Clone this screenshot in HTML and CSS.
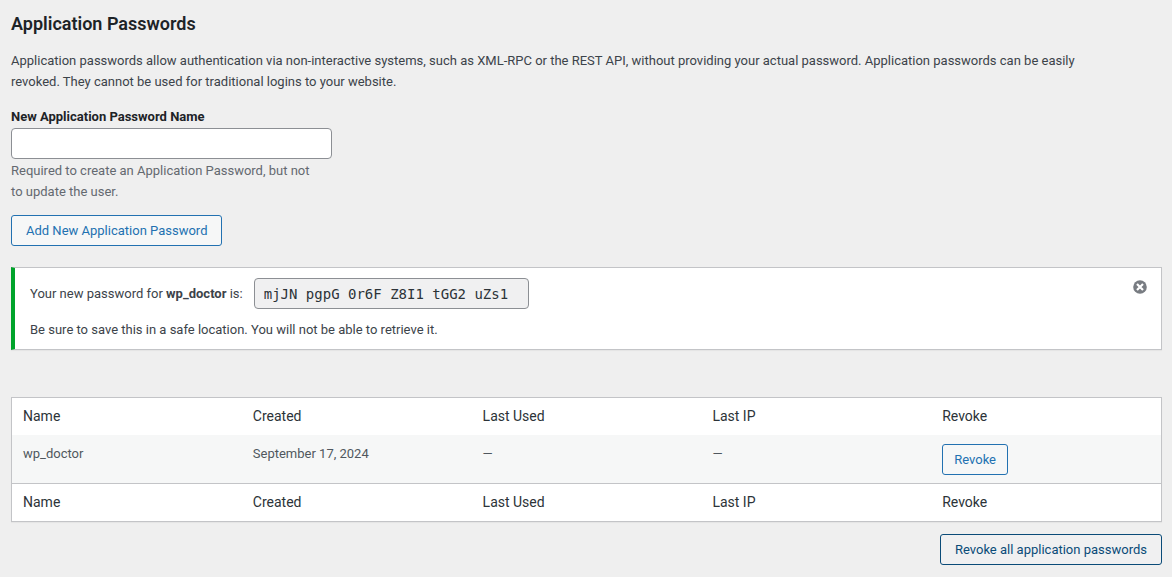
FILE: index.html
```html
<!DOCTYPE html>
<html lang="en">
<head>
<meta charset="utf-8">
<title>Application Passwords</title>
<link rel="stylesheet" href="styles.css">
</head>
<body>
<main class="application-passwords">
  <h2 class="title">Application Passwords</h2>
  <p class="intro">Application passwords allow authentication via non-interactive systems, such as XML-RPC or the REST API, without providing your actual password. Application passwords can be easily revoked. They cannot be used for traditional logins to your website.</p>

  <form class="create-form">
    <label class="field-label" for="app-name">New Application Password Name</label>
    <input class="text-input" type="text" id="app-name" aria-describedby="app-name-desc">
    <p class="description" id="app-name-desc">Required to create an Application Password, but not to update the user.</p>
    <button class="button button-wide" type="button">Add New Application Password</button>
  </form>

  <section class="notice">
    <div class="notice-body">
      <div class="password-row">
        <label for="new-password">Your new password for <strong>wp_doctor</strong> is:</label>
        <input class="code" id="new-password" type="text" readonly value="mjJN pgpG 0r6F Z8I1 tGG2 uZs1">
      </div>
      <p class="notice-text">Be sure to save this in a safe location. You will not be able to retrieve it.</p>
    </div>
    <button class="dismiss" type="button" aria-label="Dismiss this notice">
      <svg width="16" height="16" viewBox="0 0 16 16" aria-hidden="true"><circle cx="8" cy="8" r="6.8" fill="#787c82"/><path d="M5 5l6 6M11 5l-6 6" stroke="#fff" stroke-width="2.2"/></svg>
    </button>
  </section>

  <table class="list-table">
    <thead>
      <tr><th scope="col">Name</th><th scope="col">Created</th><th scope="col">Last Used</th><th scope="col">Last IP</th><th scope="col">Revoke</th></tr>
    </thead>
    <tbody>
      <tr><td>wp_doctor</td><td>September 17, 2024</td><td>—</td><td>—</td><td><button class="button" type="button">Revoke</button></td></tr>
    </tbody>
    <tfoot>
      <tr><th scope="col">Name</th><th scope="col">Created</th><th scope="col">Last Used</th><th scope="col">Last IP</th><th scope="col">Revoke</th></tr>
    </tfoot>
  </table>

  <div class="table-actions">
    <button class="button button-wide button-strong" type="button">Revoke all application passwords</button>
  </div>
</main>
</body>
</html>
```
FILE: styles.css
```css
* { box-sizing: border-box; }

body {
  margin: 0;
  background: #efefef;
  color: #3c434a;
  font: 13px/21px Roboto, sans-serif;
}

.application-passwords { padding: 12px 10px 12px 11px; }

.title {
  margin: 0;
  color: #1d2327;
  font-size: 18px;
  line-height: 24px;
  font-weight: 600;
}

.intro {
  max-width: 1110px;
  margin: 14px 0;
}

.create-form { max-width: 321px; }

.field-label {
  display: block;
  color: #1d2327;
  font-weight: 700;
}

.text-input {
  display: block;
  width: 100%;
  height: 31px;
  margin-top: 1px;
  padding: 0 8px;
  border: 1px solid #8c8f94;
  border-radius: 4px;
  background: #fff;
  font: inherit;
}

.description {
  max-width: 310px;
  margin: 1px 0 13px;
  color: #646970;
}

.button {
  display: inline-block;
  height: 31px;
  padding: 0 11px;
  border: 1px solid #2271b1;
  border-radius: 3px;
  background: #f6f7f7;
  color: #2271b1;
  font: 13px/29px Roboto, sans-serif;
  white-space: nowrap;
}

.button-wide { padding: 0 14px; }

.button-strong {
  border-color: #0a4b78;
  background: #f0f0f1;
  color: #0a4b78;
}

.notice {
  display: flex;
  justify-content: space-between;
  align-items: flex-start;
  margin-top: 21px;
  padding: 10px 13px 9px 15px;
  border: 1px solid #c3c4c7;
  border-left: 4px solid #00a32a;
  background: #fff;
  box-shadow: 0 1px 1px rgba(0, 0, 0, 0.04);
}

.password-row {
  display: flex;
  align-items: center;
  gap: 11px;
}

.code {
  width: 275px;
  height: 31px;
  padding: 0 9px;
  border: 1px solid #8c8f94;
  border-radius: 4px;
  background: #f0f0f1;
  color: #2c3338;
  font: 14px/29px "DejaVu Sans Mono", monospace;
}

.notice-text { margin: 10px 0 0; }

.dismiss {
  display: flex;
  padding: 1px 0;
  border: 0;
  background: none;
}

.list-table {
  width: 100%;
  margin-top: 47px;
  table-layout: fixed;
  border-collapse: separate;
  border-spacing: 0;
  border: 1px solid #c3c4c7;
  background: #fff;
  box-shadow: 0 1px 1px rgba(0, 0, 0, 0.04);
}

.list-table th {
  padding: 8px 11px;
  color: #2c3338;
  font-size: 14px;
  font-weight: 400;
  text-align: left;
}

.list-table td {
  padding: 9px 11px 8px;
  background: #f6f7f7;
  color: #50575e;
  line-height: 20px;
  vertical-align: top;
}

.list-table td .button { vertical-align: top; }

.list-table tfoot th { border-top: 1px solid #c3c4c7; }

.table-actions {
  display: flex;
  justify-content: flex-end;
  margin-top: 12px;
}
```
